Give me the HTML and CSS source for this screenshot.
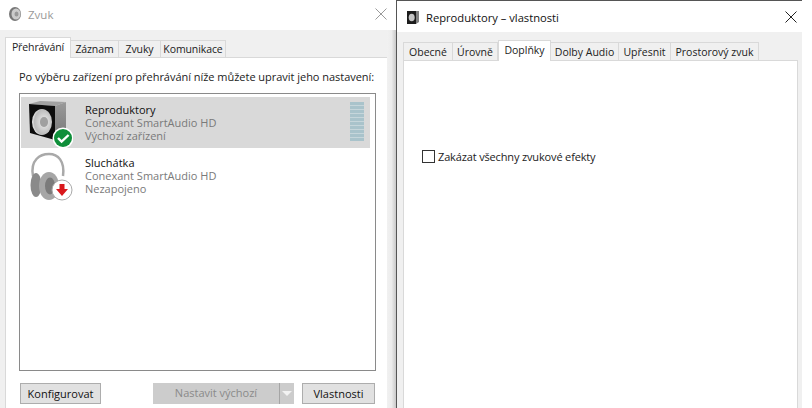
FILE: index.html
```html
<!DOCTYPE html>
<html lang="cs">
<head>
<meta charset="utf-8">
<title>Zvuk</title>
<link rel="stylesheet" href="styles.css">
</head>
<body>
<div class="desktop">
  <section class="win win-left">
    <header class="title title-left">
      <svg class="title-icon" width="14" height="16" viewBox="0 0 14 16"><ellipse cx="7" cy="8" rx="6" ry="7" fill="#777"/><ellipse cx="8" cy="8" rx="4.5" ry="5.5" fill="#ccc"/><ellipse cx="8.5" cy="8" rx="2" ry="2.5" fill="#999"/></svg>
      <span class="title-text muted">Zvuk</span>
      <svg class="close close-left" width="12" height="12" viewBox="0 0 12 12"><path d="M.5.5l11 11M11.5.5l-11 11" stroke="#9a9a9a" fill="none"/></svg>
    </header>
    <div class="body body-left">
      <nav class="tabs">
        <span class="tab active t-play">Přehrávání</span>
        <span class="tab t-rec">Záznam</span>
        <span class="tab t-snd">Zvuky</span>
        <span class="tab t-com">Komunikace</span>
      </nav>
      <div class="panel panel-left">
        <p class="hint">Po výběru zařízení pro přehrávání níže můžete upravit jeho nastavení:</p>
        <div class="list">
          <div class="row selected">
            <svg class="dev-icon" width="48" height="50" viewBox="0 0 48 50">
              <defs>
                <radialGradient id="cone" cx="60%" cy="50%" r="60%"><stop offset="0" stop-color="#8d8d8d"/><stop offset=".35" stop-color="#d8d8d8"/><stop offset=".8" stop-color="#bcbcbc"/><stop offset="1" stop-color="#eee"/></radialGradient>
                <linearGradient id="side" x1="0" y1="0" x2="0" y2="1"><stop offset="0" stop-color="#9a9a9a"/><stop offset="1" stop-color="#777"/></linearGradient>
              </defs>
              <path d="M4 5L15 2l26 1-11 4z" fill="#a2a2a2"/>
              <path d="M30 7l11-4v28l-11 10z" fill="url(#side)"/>
              <path d="M4 5l26 2v34L5 34z" fill="#0d0d0d"/>
              <ellipse cx="17" cy="23" rx="10" ry="13" fill="url(#cone)"/>
              <ellipse cx="19" cy="23" rx="4" ry="5" fill="#a0a0a0"/>
              <circle cx="38" cy="39" r="10.500" fill="#fff"/>
              <circle cx="38" cy="39" r="9" fill="#0f8f3a"/>
              <path d="M33 39l3.600 3.600 7-6.600" fill="none" stroke="#fff" stroke-width="2.400"/>
            </svg>
            <div class="dev-text"><div class="dev-name">Reproduktory</div><div class="dev-sub">Conexant SmartAudio HD</div><div class="dev-sub">Výchozí zařízení</div></div>
            <div class="meter"></div>
          </div>
          <div class="row">
            <svg class="dev-icon" width="48" height="50" viewBox="0 0 48 50">
              <path d="M8 24C5 8 15 2 24 2s16 7 14 22" fill="none" stroke="#a9a9a9" stroke-width="2.500"/>
              <ellipse cx="11" cy="33" rx="5.500" ry="12" fill="#8a8a8a"/>
              <ellipse cx="24" cy="34" rx="10" ry="14" fill="#a6a6a6"/>
              <ellipse cx="25" cy="34" rx="5" ry="8.500" fill="#7b7b7b"/>
              <circle cx="37" cy="38" r="10" fill="#fff" stroke="#aaa"/>
              <path d="M34.500 32h5v5h3.500l-6 7-6-7h3.500z" fill="#d9181c"/>
            </svg>
            <div class="dev-text"><div class="dev-name">Sluchátka</div><div class="dev-sub">Conexant SmartAudio HD</div><div class="dev-sub">Nezapojeno</div></div>
          </div>
        </div>
        <div class="actions">
          <button class="btn b-conf">Konfigurovat</button>
          <div class="split"><span class="split-main">Nastavit výchozí</span><span class="split-arrow"></span></div>
          <button class="btn b-prop">Vlastnosti</button>
        </div>
      </div>
    </div>
  </section>
  <div class="shadow"></div>
  <section class="win win-right">
    <header class="title title-right">
      <svg class="title-icon" width="13" height="14" viewBox="0 0 13 14"><path d="M0 1h9v13H0z" fill="#1c1c1c"/><path d="M9 1l3 0v11l-3 2z" fill="#808080"/><ellipse cx="4.700" cy="7.500" rx="3" ry="3.800" fill="#c4c4c4"/></svg>
      <span class="title-text">Reproduktory – vlastnosti</span>
      <svg class="close" width="12" height="12" viewBox="0 0 12 12"><path d="M.5.5l11 11M11.5.5l-11 11" stroke="#222" fill="none"/></svg>
    </header>
    <div class="body body-right">
      <nav class="tabs">
        <span class="tab t-gen">Obecné</span>
        <span class="tab t-lev">Úrovně</span>
        <span class="tab active t-add">Doplňky</span>
        <span class="tab t-dol">Dolby Audio</span>
        <span class="tab t-adv">Upřesnit</span>
        <span class="tab t-spa">Prostorový zvuk</span>
      </nav>
      <div class="panel panel-right">
        <label class="check"><span class="box"></span><span class="check-label">Zakázat všechny zvukové efekty</span></label>
      </div>
    </div>
  </section>
</div>
</body>
</html>
```
FILE: styles.css
```css
* { box-sizing: border-box; }
html, body { margin: 0; padding: 0; height: 100%; background: #fff; overflow: hidden; }
body { font-family: "Open Sans", "Noto Sans", "Liberation Sans", sans-serif; font-size: 11px; color: #111; }
.desktop { display: flex; width: 802px; height: 408px; }

.win { display: flex; flex-direction: column; height: 408px; }
.win-left { width: 387px; }
.shadow { width: 9px; background: linear-gradient(to right, #f1f1f1, #ececec 50%, #c9c9c9); margin-top: 30px; }
.win-right { width: 406px; border-left: 1px solid #555; border-top: 1px solid #555; }

.title { display: flex; align-items: center; background: #fff; flex: none; }
.title-left { height: 30px; padding: 0 1px 2px 8px; width: 396px; }
.title-right { height: 31px; padding: 1px 5px 0 10px; }
.title-icon { flex: none; }
.title-text { margin-left: 6px; flex: 1; }
.title-left .title-text { font-size: 11.500px; }
.title-right .title-text { font-size: 11.200px; }
.muted { color: #9a9a9a; }
.close { flex: none; }
.close-left { margin-right: 8px; }

.body { flex: 1; display: flex; flex-direction: column; background: #f0f0f0; min-height: 0; }
.body-left { padding: 7px 0 0 5px; }
.body-right { padding: 8px 4px 0 6px; }

.tabs { display: flex; align-items: flex-end; height: 20px; flex: none; position: relative; z-index: 1; }
.tab { height: 17px; display: flex; align-items: center; justify-content: center; background: #f0f0f0; border: 1px solid #d9d9d9; border-bottom: 0; border-left-width: 0; white-space: nowrap; font-size: 10.500px; color: #222; }
.body-left .tab { letter-spacing: -0.1px; }
.body-right .tab { height: 18px; }
.tab.active { height: 21px; margin-bottom: -1px; background: #fff; border-left-width: 1px; padding-bottom: 2px; }
.t-play { width: 66px; }
.t-rec { width: 48px; }
.t-snd { width: 42px; }
.t-com { width: 65px; }
.t-gen { width: 50px; border-left-width: 1px; }
.t-lev { width: 45px; }
.t-add { width: 53px; }
.t-dol { width: 68px; }
.t-adv { width: 52px; }
.t-spa { width: 88px; }

.panel { flex: 1; background: #fff; border: 1px solid #d9d9d9; border-bottom: 0; min-height: 0; display: flex; flex-direction: column; }
.panel-left { padding: 0 11px 0 13px; border-right: 0; }
.hint { margin: 11px 0 0; height: 17px; font-size: 11px; line-height: 15px; white-space: nowrap; letter-spacing: -0.03px; color: #222; }
.list { margin-top: 7px; height: 278px; width: 357px; flex: none; border: 1px solid #8a8a8a; padding: 3px 5px 0 1px; }
.row { display: flex; height: 51px; padding-top: 2px; padding-left: 4px; position: relative; }
.row + .row { margin-top: 2px; }
.selected { background: #d9d9d9; }
.dev-icon { flex: none; }
.dev-text { margin-left: 12px; padding-top: 4px; line-height: 13px; font-size: 11px; white-space: nowrap; flex: 1; }
.dev-name { color: #111; height: 13px; }
.dev-sub { color: #7a7a7a; height: 13px; }
.meter { position: absolute; right: 6px; top: 5px; width: 14px; height: 39px; background: repeating-linear-gradient(to bottom, #a9c3cb 0, #a9c3cb 3px, #c6d6db 3px, #c6d6db 4px); }

.actions { display: flex; align-items: center; margin-top: 12px; width: 356px; }
.btn { font: inherit; font-size: 11px; height: 21px; background: #e1e1e1; border: 1px solid #adadad; color: #111; padding: 0; }
.b-conf { width: 81px; margin-left: 1px; }
.b-prop { width: 73px; margin-left: 8px; }
.split { display: flex; align-items: center; height: 21px; width: 141px; margin-left: 52px; background: #cccccc; color: #8a8a8a; }
.split-main { flex: 1; text-align: center; height: 100%; line-height: 20px; border-right: 1px solid #a5a5a5; }
.split-arrow { width: 14px; flex: none; display: flex; justify-content: center; }
.split-arrow::after { content: ""; border-left: 5px solid transparent; border-right: 5px solid transparent; border-top: 5px solid #f2f2f2; }

.panel-right { padding: 88px 0 0 18px; }
.check { display: flex; align-items: center; font-size: 11px; color: #222; }
.box { width: 13px; height: 13px; border: 1px solid #333; background: #fff; margin-right: 3px; flex: none; }
.check-label { letter-spacing: -0.15px; }
```
